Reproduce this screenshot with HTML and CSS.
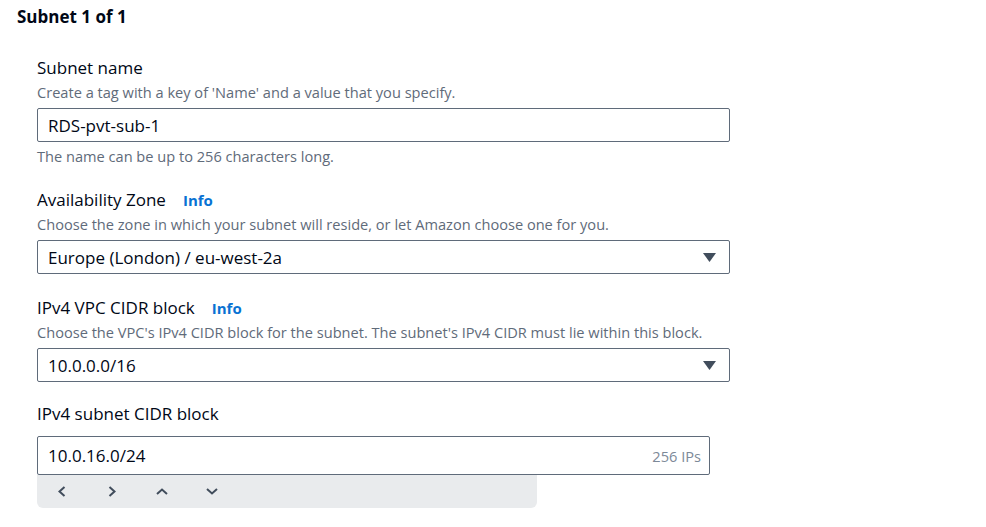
FILE: index.html
```html
<!DOCTYPE html>
<html>
<head>
<meta charset="utf-8">
<link rel="stylesheet" href="styles.css">
</head>
<body>
<div class="page">
  <h2 class="title">Subnet 1 of 1</h2>
  <div class="fields">
    <div class="field f-name">
      <div class="label">Subnet name</div>
      <div class="desc">Create a tag with a key of 'Name' and a value that you specify.</div>
      <div class="input">RDS-pvt-sub-1</div>
      <div class="constraint">The name can be up to 256 characters long.</div>
    </div>
    <div class="field f-az">
      <div class="label">Availability Zone <a class="info">Info</a></div>
      <div class="desc">Choose the zone in which your subnet will reside, or let Amazon choose one for you.</div>
      <div class="input select"><span>Europe (London) / eu-west-2a</span><svg class="caret" width="13" height="9" viewBox="0 0 13 9"><path d="M0 0H13L6.5 9Z" fill="#414d5c"/></svg></div>
    </div>
    <div class="field f-vpc">
      <div class="label">IPv4 VPC CIDR block <a class="info">Info</a></div>
      <div class="desc">Choose the VPC's IPv4 CIDR block for the subnet. The subnet's IPv4 CIDR must lie within this block.</div>
      <div class="input select"><span>10.0.0.0/16</span><svg class="caret" width="13" height="9" viewBox="0 0 13 9"><path d="M0 0H13L6.5 9Z" fill="#414d5c"/></svg></div>
    </div>
    <div class="field f-cidr">
      <div class="label">IPv4 subnet CIDR block</div>
      <div class="input cidr"><span>10.0.16.0/24</span><span class="ips">256 IPs</span></div>
      <div class="stepper">
        <svg class="st st-l" width="8" height="11" viewBox="0 0 8 11"><path d="M6.5 1L1.5 5.5L6.5 10" fill="none" stroke="#414d5c" stroke-width="2"/></svg>
        <svg class="st st-r" width="8" height="11" viewBox="0 0 8 11"><path d="M1.5 1L6.5 5.5L1.5 10" fill="none" stroke="#414d5c" stroke-width="2"/></svg>
        <svg class="st st-u" width="12" height="7" viewBox="0 0 12 7"><path d="M1 6L6 1.5L11 6" fill="none" stroke="#414d5c" stroke-width="2"/></svg>
        <svg class="st st-d" width="12" height="7" viewBox="0 0 12 7"><path d="M1 1L6 5.5L11 1" fill="none" stroke="#414d5c" stroke-width="2"/></svg>
      </div>
    </div>
  </div>
</div>
</body>
</html>
```
FILE: styles.css
```css
html, body {
  margin: 0;
  padding: 0;
  background: #ffffff;
}
body {
  font-family: "Open Sans", "Noto Sans", sans-serif;
  color: #000716;
}
.page {
  padding: 6px 0 0 17px;
}
.title {
  margin: 0;
  font-size: 17px;
  font-weight: 700;
  line-height: 22px;
}
.fields {
  padding-left: 20px;
  padding-top: 28px;
  display: flex;
  flex-direction: column;
}
.field {
  width: 693px;
  display: flex;
  flex-direction: column;
}
.f-az, .f-vpc {
  margin-top: 22px;
}
.f-cidr {
  margin-top: 20px;
}
.label {
  font-size: 17px;
  line-height: 24px;
  display: flex;
  align-items: baseline;
  gap: 17px;
}
.info {
  color: #0972d3;
  font-weight: 700;
  font-size: 15px;
}
.desc {
  font-size: 14.6px;
  line-height: 20px;
  color: #5f6b7a;
  margin-top: 2px;
  margin-bottom: 6px;
  white-space: nowrap;
}
.input {
  box-sizing: border-box;
  height: 34px;
  border: 1px solid #5f6b7a;
  border-radius: 2px;
  padding: 0 10px;
  font-size: 17px;
  display: flex;
  align-items: center;
  justify-content: space-between;
}
.select {
  padding-right: 13px;
}
.constraint {
  font-size: 14.6px;
  line-height: 20px;
  color: #5f6b7a;
  margin-top: 4px;
}
.f-cidr .label {
  margin-bottom: 10px;
}
.cidr {
  width: 673px;
  height: 39px;
  position: relative;
  z-index: 1;
  background: #fff;
  padding-right: 8px;
}
.ips {
  font-size: 14.6px;
  color: #7d8998;
}
.stepper {
  width: 500px;
  height: 34px;
  margin-top: -1px;
  background: #e9ebed;
  border-radius: 0 0 6px 6px;
  display: flex;
  align-items: center;
  padding-left: 21px;
  box-sizing: border-box;
}
.st-l { margin-right: 42px; }
.st-r { margin-right: 40px; }
.st-u { margin-right: 38px; }
```
